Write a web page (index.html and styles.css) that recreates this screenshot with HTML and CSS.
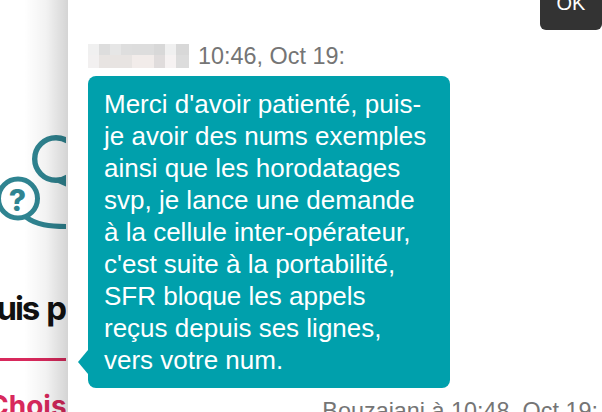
FILE: index.html
```html
<!DOCTYPE html>
<html lang="fr">
<head>
    <meta charset="UTF-8">
    <meta name="viewport" content="width=device-width, initial-scale=1.0">
    <title>Chat</title>
    <link rel="stylesheet" href="styles.css">
</head>
<body>
    <div class="side">
        <div class="side-inner">
            <svg class="side-icon" width="66" height="110" viewBox="0 0 66 110" fill="none">
                <circle cx="56" cy="25" r="21.3" stroke="#2f8491" stroke-width="5.4"/>
                <path d="M58 46 L67 50" stroke="#2f8491" stroke-width="5.4"/>
                <path d="M26 83 C36 91 50 92.5 67 92.5" stroke="#2f8491" stroke-width="5"/>
                <circle cx="18" cy="64.5" r="19.5" fill="#fff" stroke="#2f8491" stroke-width="5"/>
                <text class="side-q" x="17.5" y="77" text-anchor="middle">?</text>
            </svg>
            <div class="side-title">Puis p</div>
            <div class="side-rule"></div>
            <div class="side-choice">Chois</div>
        </div>
    </div>
    <div class="chat">
        <div class="ok-row"><button class="ok">OK</button></div>
        <div class="meta">
            <span class="blur-name"></span>
            <span>10:46, Oct 19:</span>
        </div>
        <div class="bubble">Merci d'avoir patienté, puis-je avoir des nums exemples ainsi que les horodatages svp, je lance une demande à la cellule inter-opérateur, c'est suite à la portabilité, SFR bloque les appels reçus depuis ses lignes, vers votre num.</div>
        <div class="meta meta-right">Bouzaiani à 10:48, Oct 19:</div>
    </div>
</body>
</html>
```

FILE: styles.css
```css
html, body {
    height: 100%;
}
body {
    margin: 0;
    display: flex;
    overflow: hidden;
    background: #fff;
    font-family: "Liberation Sans", Arial, sans-serif;
}
.side {
    width: 68px;
    flex: none;
    position: relative;
}
.side::after {
    content: "";
    position: absolute;
    top: 0;
    bottom: 0;
    right: 0;
    width: 44px;
    background: linear-gradient(to right, rgba(0, 0, 0, 0), rgba(0, 0, 0, 0.05) 50%, rgba(0, 0, 0, 0.17));
}
.side-inner {
    width: 66px;
    height: 100%;
    overflow: hidden;
    padding-top: 134px;
    box-sizing: border-box;
}
.side-icon {
    display: block;
}
.side-q {
    font-family: "Inter", sans-serif;
    font-size: 30px;
    font-weight: 800;
    fill: #2f8491;
}
.side-title {
    margin: 46px 0 0 -23px;
    font-family: "Inter", sans-serif;
    font-size: 33px;
    font-weight: 700;
    line-height: 36px;
    letter-spacing: -2px;
    word-spacing: 2px;
    color: #111;
    white-space: nowrap;
}
.side-rule {
    height: 3px;
    margin-top: 32px;
    background: #d8295c;
}
.side-choice {
    margin: 30px 0 0 -12px;
    font-family: "Inter", sans-serif;
    font-size: 28px;
    font-weight: 700;
    line-height: 30px;
    color: #d8295c;
    white-space: nowrap;
}
.chat {
    flex: 1;
    min-width: 0;
    padding-left: 20px;
}
.ok-row {
    display: flex;
    justify-content: flex-end;
    height: 44px;
}
.ok {
    width: 62px;
    height: 44px;
    margin-top: -14px;
    padding: 0 0 10px;
    border: none;
    border-radius: 0 0 6px 6px;
    background: #333;
    color: #fff;
    font-family: "Liberation Sans", Arial, sans-serif;
    font-size: 20px;
}
.meta {
    display: flex;
    align-items: center;
    gap: 9px;
    height: 24px;
    font-size: 23.4px;
    color: #757575;
    white-space: nowrap;
}
.blur-name {
    width: 101px;
    height: 24px;
    background-image:
        linear-gradient(to right, #f0f0f0 0 11px, #dddddd 11px 22px, #e6e6e6 22px 33px, #dedede 33px 44px, #dddddd 44px 66px, #d8d8d8 66px 77px, #f0f0f0 77px 88px, #d8d8d8 88px),
        linear-gradient(to right, #f2f0f0 0 11px, #e8e4e2 11px 44px, #f2ecea 44px 66px, #e0dcdc 66px 77px, #f6f2f2 77px 88px, #dcdcdc 88px);
    background-size: 100% 11px, 100% 13px;
    background-position: 0 0, 0 11px;
    background-repeat: no-repeat;
}
.bubble {
    position: relative;
    width: 362px;
    box-sizing: border-box;
    margin-top: 8px;
    padding: 12px 16px;
    border-radius: 8px;
    background: #00a0ac;
    color: #fff;
    font-size: 26px;
    line-height: 32px;
}
.bubble::before {
    content: "";
    position: absolute;
    left: -10px;
    bottom: 14px;
    width: 10px;
    height: 24px;
    background: #00a0ac;
    clip-path: polygon(100% 0, 100% 100%, 0 50%);
}
.meta-right {
    justify-content: flex-end;
    margin-top: 11px;
    padding-right: 4px;
}
```
